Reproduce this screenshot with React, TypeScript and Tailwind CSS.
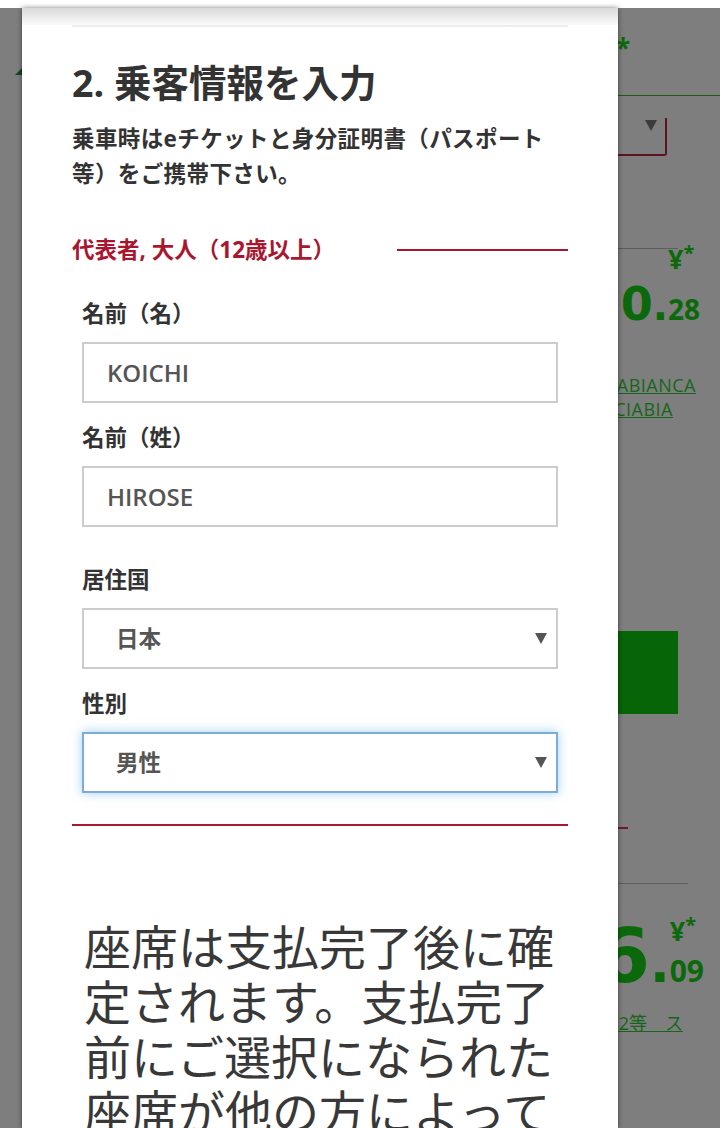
import React from "react";

function Tri({ fill = "#555" }: { fill?: string }) {
  return (
    <svg width="12" height="11" viewBox="0 0 12 11" className="shrink-0">
      <polygon points="0,0 12,0 6,11" fill={fill} />
    </svg>
  );
}

function Label({ children }: { children: React.ReactNode }) {
  return <div className="text-[22.5px] leading-[28px] font-bold text-[#333]">{children}</div>;
}

function TextField({ label, value, className = "" }: { label: string; value: string; className?: string }) {
  return (
    <div className={className}>
      <Label>{label}</Label>
      <div className="mt-[14px] h-[61px] border-2 border-[#cccccc] flex items-center pl-[23px] text-[24px] font-semibold text-[#555]">
        {value}
      </div>
    </div>
  );
}

function SelectField({
  label,
  value,
  focused = false,
  className = "",
}: {
  label: string;
  value: string;
  focused?: boolean;
  className?: string;
}) {
  return (
    <div className={className}>
      <Label>{label}</Label>
      <div
        className={
          focused
            ? "mt-[14px] h-[61px] border-2 border-[#7aaed8] shadow-[0_0_10px_rgba(102,175,233,0.6)] flex items-center justify-between pl-[32px] pr-[9px]"
            : "mt-[14px] h-[61px] border-2 border-[#cccccc] flex items-center justify-between pl-[32px] pr-[9px]"
        }
      >
        <span className="text-[22.5px] font-bold text-[#555]">{value}</span>
        <Tri />
      </div>
    </div>
  );
}

function Background() {
  return (
    <div className="flex flex-col">
      <div className="h-[8px] bg-white" />
      <div className="mt-[28px] h-[24px] pl-[616px] text-[26px] leading-[24px] font-bold text-[#0b690b]">*</div>
      <div className="mt-[7px] h-[8px] pl-[15px]">
        <svg width="8" height="8" viewBox="0 0 8 8">
          <polygon points="0,8 8,0 8,8" fill="#0c4a1c" />
        </svg>
      </div>
      <div className="mt-[20px] h-px ml-[540px] bg-[#1b5e1b]" />
      <div className="mt-[22px] h-[38px] ml-[420px] w-[247px] border-r-2 border-b-2 border-[#5e1320] rounded-br-[3px] flex justify-end items-start pr-[8px] pt-[2px]">
        <Tri fill="#3c3c3c" />
      </div>
      <div className="mt-[92px] h-px ml-[560px] w-[118px] bg-[#5c5c5c]" />
      <div className="-mt-[4px] flex justify-end pr-[20px]">
        <div className="flex items-end font-bold text-[#0b690b]">
          <span className="[font-family:'DejaVu_Sans'] text-[46px] leading-[38px]">0</span>
          <span className="[font-family:'DejaVu_Sans'] text-[40px] leading-[34px]">.</span>
          <div className="flex flex-col">
            <div className="flex items-start h-[27px]">
              <span className="text-[27px] leading-[27px]">¥</span>
              <span className="text-[20px] leading-[20px] -mt-[2px]">*</span>
            </div>
            <span className="mt-[23px] text-[28px] leading-[28px]">28</span>
          </div>
        </div>
      </div>
      <div className="mt-[50px] flex justify-end pr-[24px] text-[18px] leading-[24px] tracking-[0.5px] underline text-[#16661a] whitespace-nowrap">
        CASABIANCA
      </div>
      <div className="flex justify-end pr-[47px] text-[18px] leading-[24px] tracking-[0.5px] underline text-[#16661a] whitespace-nowrap">
        FRECCIABIA
      </div>
      <div className="mt-[210px] h-[83px] ml-[540px] w-[138px] bg-[#066506]" />
      <div className="mt-[113px] h-[2px] ml-[560px] w-[68px] bg-[#6e1a26]" />
      <div className="mt-[54px] h-px ml-[560px] w-[128px] bg-[#5c5c5c]" />
      <div className="mt-[33px] flex justify-end pr-[16px]">
        <div className="flex items-end font-bold text-[#0b690b]">
          <span className="[font-family:'DejaVu_Sans'] text-[75px] leading-[59px]">6</span>
          <span className="[font-family:'DejaVu_Sans'] text-[52px] leading-[43px]">.</span>
          <div className="flex flex-col">
            <div className="flex items-start h-[27px]">
              <span className="text-[27px] leading-[27px]">¥</span>
              <span className="text-[20px] leading-[20px] -mt-[2px]">*</span>
            </div>
            <span className="mt-[12px] text-[30px] leading-[30px]">09</span>
          </div>
        </div>
      </div>
      <div className="mt-[26px] flex justify-end pr-[37px] text-[18px] leading-[22px] underline text-[#16661a] whitespace-nowrap">
        1・2等　ス
      </div>
    </div>
  );
}

function Modal() {
  return (
    <div className="absolute left-[22px] top-[8px] bottom-0 w-[596px] bg-white shadow-[0_0_5px_rgba(0,0,0,0.5)] overflow-hidden">
      <div className="h-[17px] bg-linear-to-b from-[#d9d9d9] to-[#fbfbfb]" />
      <div className="px-[50px]">
        <div className="h-[2px] bg-[#ececec]" />
        <h2 className="mt-[34px] text-[37.5px] leading-[44px] font-bold text-[#333]">2. 乗客情報を入力</h2>
        <p className="mt-[16px] text-[22.5px] leading-[35px] font-bold text-[#333] tracking-[0.4px]">
          乗車時はeチケットと身分証明書（パスポート等）をご携帯下さい。
        </p>
        <div className="mt-[44px] h-[30px] flex items-center">
          <span className="text-[22.5px] leading-[30px] font-bold text-[#a8172f]">代表者, 大人（12歳以上）</span>
          <div className="ml-auto w-[171px] h-[2px] bg-[#a8172f]" />
        </div>
        <div className="mt-[35px] px-[10px] flex flex-col">
          <TextField label="名前（名）" value="KOICHI" />
          <TextField className="mt-[21px]" label="名前（姓）" value="HIROSE" />
          <SelectField className="mt-[39px]" label="居住国" value="日本" />
          <SelectField className="mt-[21px]" label="性別" value="男性" focused />
        </div>
        <div className="mt-[31px] h-[2px] bg-[#a8172f]" />
        <p className="mt-[94px] px-[12px] text-[47px] leading-[55px] font-normal text-[#383838]">
          座席は支払完了後に確定されます。支払完了前にご選択になられた座席が他の方によって購入された場合は、別の座席が割り当てられます。
        </p>
      </div>
    </div>
  );
}

export default function App() {
  return (
    <div className="relative w-[720px] h-[1128px] overflow-hidden bg-[#7e7e7e] [font-family:'Open_Sans','Noto_Sans_CJK_JP',sans-serif]">
      <Background />
      <Modal />
    </div>
  );
}
